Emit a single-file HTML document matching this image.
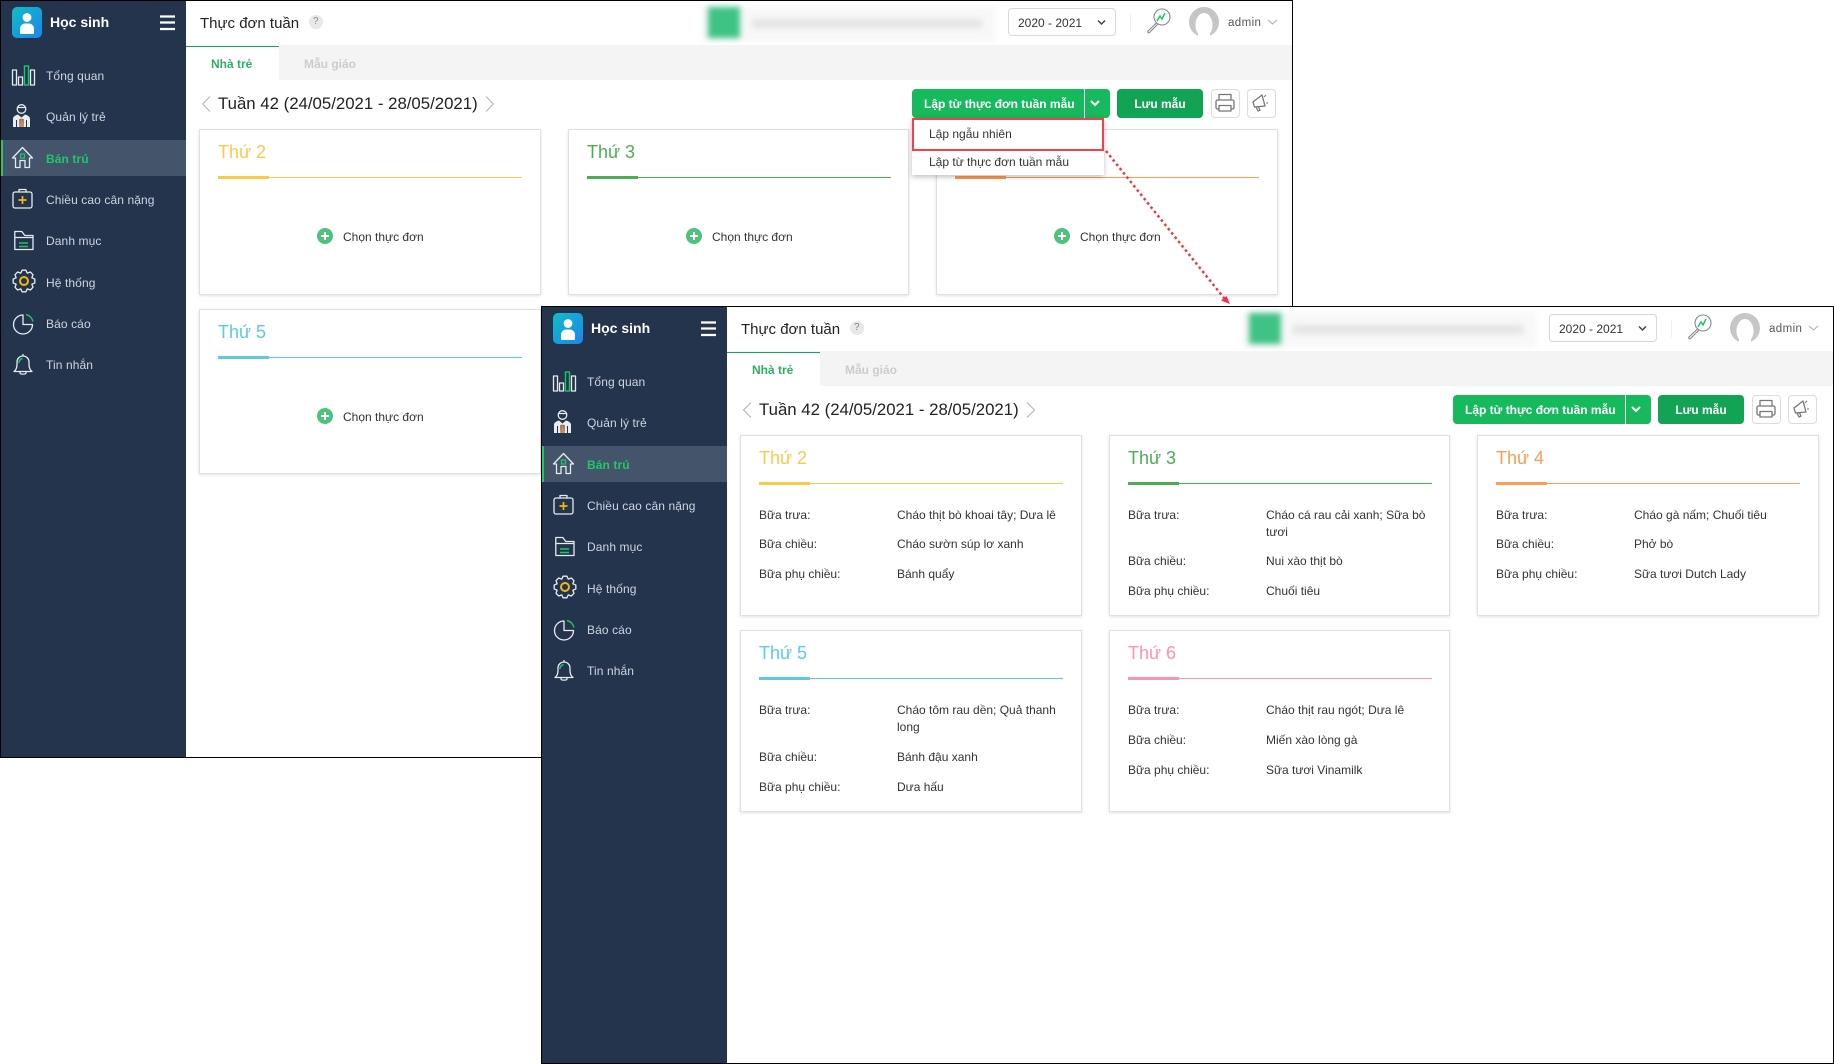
<!DOCTYPE html>
<html lang="vi"><head><meta charset="utf-8"><title>Thực đơn tuần</title>
<style>
html,body{margin:0;padding:0;background:#fff}
body{position:relative;width:1834px;height:1064px;overflow:hidden;font-family:"Liberation Sans","DejaVu Sans",sans-serif;color:#333}
.win{position:absolute;width:1293px;height:758px;background:#fff;overflow:hidden}
.bd{position:absolute;inset:0;border:1px solid #000;box-sizing:border-box;pointer-events:none;z-index:9}
.side{position:absolute;left:1px;top:0;width:185px;height:758px;background:#25344d}
.act{position:absolute;left:1px;top:140px;width:185px;height:36px;background:#44546a;border-left:2px solid #1fc867;box-sizing:border-box}
.tabs{position:absolute;left:186px;top:46px;right:0;height:34px;background:#f4f4f4}
.tab{position:absolute;left:186px;top:46px;width:93px;height:34px;background:#fff;border-top:1px solid #16a35a;box-sizing:border-box}
.t{position:absolute;white-space:nowrap;line-height:20px;height:20px;z-index:3}
.m{left:46px;font-size:12px;color:#ccd6e0;letter-spacing:.1px}
.ov{position:absolute;left:0;top:0;width:1293px;height:758px;pointer-events:none;z-index:2}
.card{position:absolute;width:342px;background:#fff;border:1px solid #e0e0e0;box-sizing:border-box;box-shadow:0 1px 3px rgba(0,0,0,.12)}
.card .h{position:absolute;left:18px;top:11px;font-size:18px;line-height:22px;white-space:nowrap}
.card .l{position:absolute;left:18px;top:47px;width:304px;height:1px}
.card .k{position:absolute;left:18px;top:46px;width:51px;height:3px}
.card .a,.card .b{position:absolute;white-space:nowrap;font-size:12px;line-height:17px;color:#333}
.card .a{left:18px}.card .b{left:156px}
.add{position:absolute;left:117px;top:98px;width:16px;height:16px;border-radius:50%;background:#4cc27d}
.add:before,.add:after{content:"";position:absolute;background:#fff}
.add:before{left:4px;top:7px;width:8px;height:2px}
.add:after{left:7px;top:4px;width:2px;height:8px}
.cho{position:absolute;left:143px;top:98px;font-size:12px;line-height:18px;white-space:nowrap;color:#333}
.y .h{color:#fdc94a}.y .l,.y .k{background:#fdc94a}
.g .h{color:#4cae52}.g .l,.g .k{background:#4cae52}
.o .h{color:#fd9c52}.o .l,.o .k{background:#fd9c52}
.c .h{color:#5ccae3}.c .l,.c .k{background:#5ccae3}
.p .h{color:#ff92ad}.p .l,.p .k{background:#ff92ad}
.btn{position:absolute;top:89px;height:29px;border-radius:4px;color:#fff;font-weight:bold;font-size:12px;line-height:31px;white-space:nowrap;box-sizing:border-box}
.ic{position:absolute;top:89px;width:29px;height:29px;border:1px solid #dcdcdc;border-radius:4px;box-sizing:border-box;background:#fff}
.sel{position:absolute;left:1008px;top:8px;width:108px;height:28px;border:1px solid #d8d8d8;border-radius:4px;box-sizing:border-box;background:#fff}
.blurbg{position:absolute;left:702px;top:6px;width:294px;height:36px;background:#f8f8f8;filter:blur(3px)}
.blurg{position:absolute;left:708px;top:7px;width:32px;height:31px;background:#3fc384;filter:blur(3px)}
.blurt{position:absolute;left:752px;top:19px;width:230px;height:9px;background:#e4e4e4;filter:blur(3px)}
.hsh{position:absolute;left:186px;top:45px;right:0;height:1px;background:#f5f5f5}
</style></head><body>

<svg width="0" height="0" style="position:absolute"><defs>
<linearGradient id="lg" x1="0" y1="0" x2="1" y2="1"><stop offset="0" stop-color="#11bcc6"/><stop offset="1" stop-color="#1b86ea"/></linearGradient>
<g id="chrome">
 <rect x="12" y="7" width="30" height="31" rx="5" fill="url(#lg)"/>
 <circle cx="27" cy="17.500" r="4.400" fill="#fff"/>
 <path d="M20 33v-4c0-3.500 2.500-5.500 5-5.500h4c2.500 0 5 2 5 5.500v4c0 .6-.5 1-1 1H21c-.5 0-1-.4-1-1z" fill="#fff"/>
 <path d="M160 16.500h15M160 22.500h15M160 29h15" stroke="#fff" stroke-width="2.300" fill="none"/>
 <path d="M13 127v-8c0-2.500 2-3.500 5-4.500l3.500 3 3.500-3c3 1 5 2 5 4.500v8h-3v-7h-1v7h-2.500v-8h-4v8H17v-7h-1v7z" fill="#e8edf2"/>
 <g fill="none" stroke="#e6ebf0" stroke-width="1.300" stroke-linejoin="round" stroke-linecap="round">
  <rect x="12.500" y="70" width="4" height="15"/><rect x="18.500" y="77" width="4" height="8"/><rect x="30.500" y="70" width="4" height="15"/>
  <circle cx="21.500" cy="109" r="4.300"/><path d="M17.500 107.500h8"/>
  <path d="M12.500 158L22.500 147.500 32.500 158 29.500 158V167.500H25V160.500H20V167.500H15.500V158Z"/>
  <rect x="13" y="192" width="19" height="16" rx="2"/><path d="M19 192v-2.500h7V192"/>
  <path d="M14.800 249.500V231.500h7l3 4H33V249.500ZM14.800 237.500H33"/>
  <path transform="translate(24 281)" d="M10.830-1.910L10.830 1.910 7.850 3.250 9.010 6.310 6.310 9.010 3.250 7.850 1.910 10.830-1.910 10.830-3.250 7.850-6.310 9.010-9.010 6.310-7.850 3.250-10.830 1.910-10.830-1.910-7.850-3.250-9.010-6.310-6.310-9.010-3.250-7.850-1.910-10.830 1.910-10.830 3.250-7.850 6.310-9.010 9.010-6.310 7.850-3.250Z"/>
  <path d="M23 315A9.500 9.500 0 1 0 32.500 324.500H23V315Z"/>
  <path d="M14 371.500c2.500-2 3-4 3-7V362a6 6 0 0 1 12 0v2.500c0 3 .5 5 3 7ZM23 356v-1.500M20 371.500v1.500c0 1.500 6 1.500 6 0v-1.500"/>
 </g>
 <rect x="24.500" y="66" width="4" height="19" fill="none" stroke="#1ec467" stroke-width="1.400"/>
 <path d="M20.500 118.500h2l.8 8.500h-3.600z" fill="#e6863a"/>
 <rect x="20.500" y="154" width="4" height="4" fill="none" stroke="#1ec467" stroke-width="1.300"/>
 <path d="M18.500 200h8M22.500 196v8" stroke="#f0b90b" stroke-width="1.700" fill="none"/>
 <path d="M19 243h9M19 246.500h9" stroke="#1ec467" stroke-width="1.500" fill="none"/>
 <circle cx="24" cy="281" r="4" fill="none" stroke="#f0b90b" stroke-width="2"/>
 <path d="M26 314.500A9.500 9.500 0 0 1 33 321.500" fill="none" stroke="#1ec467" stroke-width="1.500"/>
 <path d="M18.800 363c.3-2.500 1.600-4 3.800-4.500" fill="none" stroke="#1ec467" stroke-width="1.500"/>
 <circle cx="316" cy="22" r="7" fill="#e8e8e8"/>
 <path d="M210 96.500l-7.500 7.500 7.500 7.500" fill="none" stroke="#b0b0b0" stroke-width="1"/>
 <path d="M486 96.500l7.500 7.500-7.500 7.500" fill="none" stroke="#b0b0b0" stroke-width="1"/>
 <path d="M1098 20.500l3.500 3.500 3.500-3.500" fill="none" stroke="#444" stroke-width="1.500"/>
 <path d="M1130.500 14v17" stroke="#eee" fill="none"/>
 <g fill="none" stroke="#888" stroke-width="1.100">
  <circle cx="1162" cy="17" r="8"/><path d="M1156.500 23l-8.500 8c-1 1 .5 2.500 1.500 1.500l8.500-8.500"/>
 </g>
 <path d="M1157 21l3-5 2 3 3-6" fill="none" stroke="#1ec467" stroke-width="1.500"/>
 <circle cx="1204" cy="22" r="15" fill="#c6c6c6"/>
 <ellipse cx="1204" cy="25" rx="8.500" ry="12" fill="#fff"/><rect x="1198" y="31" width="12" height="7" fill="#fff"/><rect x="1186" y="37" width="36" height="3" fill="#fff"/>
 <path d="M1268 20l4.500 4 4.500-4" fill="none" stroke="#aaa" stroke-width="1"/>
 <path d="M1091 101l4 4 4-4" fill="none" stroke="#fff" stroke-width="2"/>
 <path d="M1084.500 89v29" stroke="#fff" fill="none"/>
 <g fill="none" stroke="#777" stroke-width="1.300" stroke-linejoin="round">
  <path d="M1219 100v-5.500h12v5.500M1218.500 109h-1c-.8 0-1.500-.7-1.500-1.500v-6c0-.8.7-1.500 1.500-1.500h15c.8 0 1.500.7 1.500 1.500v6c0 .8-.7 1.500-1.500 1.500h-1"/>
  <rect x="1219" y="105.500" width="12" height="5.500"/>
  <path d="M1253 102l9-7 3 11-10.500 1zM1256 107l2 4 2-.8-1.500-3.500"/>
 </g>
 <path d="M1264 97l2-2M1266 103h2" stroke="#777" fill="none"/>
</g>
</defs></svg>

<!-- WINDOW 1 -->
<div class="win" style="left:0;top:0;z-index:1">
 <div class="side"></div><div class="act"></div>
 <div class="hsh"></div><div class="tabs"></div><div class="tab"></div>
 <div class="blurbg"></div><div class="blurg"></div><div class="blurt"></div>
 <div class="sel"></div>
 <div class="t" style="left:50px;top:12px;font-size:14px;font-weight:bold;color:#fff">Học sinh</div>
 <div class="t m" style="top:66px">Tổng quan</div>
 <div class="t m" style="top:107px">Quản lý trẻ</div>
 <div class="t m" style="top:149px;color:#1fc867;font-weight:bold">Bán trú</div>
 <div class="t m" style="top:190px">Chiều cao cân nặng</div>
 <div class="t m" style="top:231px">Danh mục</div>
 <div class="t m" style="top:273px">Hệ thống</div>
 <div class="t m" style="top:314px">Báo cáo</div>
 <div class="t m" style="top:355px">Tin nhắn</div>
 <div class="t" style="left:200px;top:14px;font-size:15px;color:#222">Thực đơn tuần</div>
 <div class="t" style="left:313px;top:12px;font-size:10px;color:#888">?</div>
 <div class="t" style="left:211px;top:54px;font-size:12px;font-weight:bold;color:#2fae62">Nhà trẻ</div>
 <div class="t" style="left:304px;top:54px;font-size:12px;font-weight:bold;color:#ccc">Mẫu giáo</div>
 <div class="t" style="left:218px;top:94px;font-size:16.800px;color:#222">Tuần 42 (24/05/2021 - 28/05/2021)</div>
 <div class="t" style="left:1018px;top:13px;font-size:12px;color:#333">2020 - 2021</div>
 <div class="t" style="left:1228px;top:13px;font-size:11.500px;color:#555;letter-spacing:.4px">admin</div>
 <div class="btn" style="left:912px;width:198px;background:#16b95b;padding-left:12px">Lập từ thực đơn tuần mẫu</div>
 <div class="btn" style="left:1117px;width:86px;background:#12a354;text-align:center">Lưu mẫu</div>
 <div class="ic" style="left:1211px"></div><div class="ic" style="left:1247px"></div>

 <div class="card y" style="left:199px;top:129px;height:166px"><div class="h">Thứ 2</div><div class="l"></div><div class="k"></div><div class="add"></div><div class="cho">Chọn thực đơn</div></div>
 <div class="card g" style="left:568px;top:129px;height:166px;width:341px"><div class="h">Thứ 3</div><div class="l"></div><div class="k"></div><div class="add"></div><div class="cho">Chọn thực đơn</div></div>
 <div class="card o" style="left:936px;top:129px;height:166px"><div class="h">Thứ 4</div><div class="l"></div><div class="k"></div><div class="add"></div><div class="cho">Chọn thực đơn</div></div>
 <div class="card c" style="left:199px;top:309px;height:165px"><div class="h">Thứ 5</div><div class="l"></div><div class="k"></div><div class="add"></div><div class="cho">Chọn thực đơn</div></div>

 <div style="position:absolute;left:912px;top:118px;width:192px;height:57px;background:#fff;box-shadow:0 2px 5px rgba(0,0,0,.25);z-index:3">
  <div class="t" style="left:17px;top:6px;font-size:12px;color:#333">Lập ngẫu nhiên</div>
  <div class="t" style="left:17px;top:34px;font-size:12px;color:#333">Lập từ thực đơn tuần mẫu</div>
  <div style="position:absolute;left:0;top:0;width:192px;height:33px;border:2px solid #f44048;box-sizing:border-box"></div>
 </div>
 <svg class="ov" viewBox="0 0 1293 758"><use href="#chrome"/></svg>
 <div class="bd"></div>
</div>

<!-- WINDOW 2 -->
<div class="win" style="left:541px;top:306px;z-index:2">
 <div class="side"></div><div class="act"></div>
 <div class="hsh"></div><div class="tabs"></div><div class="tab"></div>
 <div class="blurbg"></div><div class="blurg"></div><div class="blurt"></div>
 <div class="sel"></div>
 <div class="t" style="left:50px;top:12px;font-size:14px;font-weight:bold;color:#fff">Học sinh</div>
 <div class="t m" style="top:66px">Tổng quan</div>
 <div class="t m" style="top:107px">Quản lý trẻ</div>
 <div class="t m" style="top:149px;color:#1fc867;font-weight:bold">Bán trú</div>
 <div class="t m" style="top:190px">Chiều cao cân nặng</div>
 <div class="t m" style="top:231px">Danh mục</div>
 <div class="t m" style="top:273px">Hệ thống</div>
 <div class="t m" style="top:314px">Báo cáo</div>
 <div class="t m" style="top:355px">Tin nhắn</div>
 <div class="t" style="left:200px;top:14px;font-size:15px;color:#222">Thực đơn tuần</div>
 <div class="t" style="left:313px;top:12px;font-size:10px;color:#888">?</div>
 <div class="t" style="left:211px;top:54px;font-size:12px;font-weight:bold;color:#2fae62">Nhà trẻ</div>
 <div class="t" style="left:304px;top:54px;font-size:12px;font-weight:bold;color:#ccc">Mẫu giáo</div>
 <div class="t" style="left:218px;top:94px;font-size:16.800px;color:#222">Tuần 42 (24/05/2021 - 28/05/2021)</div>
 <div class="t" style="left:1018px;top:13px;font-size:12px;color:#333">2020 - 2021</div>
 <div class="t" style="left:1228px;top:13px;font-size:11.500px;color:#555;letter-spacing:.4px">admin</div>
 <div class="btn" style="left:912px;width:198px;background:#16b95b;padding-left:12px">Lập từ thực đơn tuần mẫu</div>
 <div class="btn" style="left:1117px;width:86px;background:#12a354;text-align:center">Lưu mẫu</div>
 <div class="ic" style="left:1211px"></div><div class="ic" style="left:1247px"></div>

 <div class="card y" style="left:199px;top:129px;height:181px"><div class="h">Thứ 2</div><div class="l"></div><div class="k"></div>
  <div class="a" style="top:71px">Bữa trưa:</div><div class="b" style="top:71px">Cháo thịt bò khoai tây; Dưa lê</div>
  <div class="a" style="top:100px">Bữa chiều:</div><div class="b" style="top:100px">Cháo sườn súp lơ xanh</div>
  <div class="a" style="top:130px">Bữa phụ chiều:</div><div class="b" style="top:130px">Bánh quẩy</div></div>
 <div class="card g" style="left:568px;top:129px;height:181px;width:341px"><div class="h">Thứ 3</div><div class="l"></div><div class="k"></div>
  <div class="a" style="top:71px">Bữa trưa:</div><div class="b" style="top:71px">Cháo cá rau cải xanh; Sữa bò</div><div class="b" style="top:88px">tươi</div>
  <div class="a" style="top:117px">Bữa chiều:</div><div class="b" style="top:117px">Nui xào thịt bò</div>
  <div class="a" style="top:147px">Bữa phụ chiều:</div><div class="b" style="top:147px">Chuối tiêu</div></div>
 <div class="card o" style="left:936px;top:129px;height:181px"><div class="h">Thứ 4</div><div class="l"></div><div class="k"></div>
  <div class="a" style="top:71px">Bữa trưa:</div><div class="b" style="top:71px">Cháo gà nấm; Chuối tiêu</div>
  <div class="a" style="top:100px">Bữa chiều:</div><div class="b" style="top:100px">Phở bò</div>
  <div class="a" style="top:130px">Bữa phụ chiều:</div><div class="b" style="top:130px">Sữa tươi Dutch Lady</div></div>
 <div class="card c" style="left:199px;top:324px;height:182px"><div class="h">Thứ 5</div><div class="l"></div><div class="k"></div>
  <div class="a" style="top:71px">Bữa trưa:</div><div class="b" style="top:71px">Cháo tôm rau dền; Quả thanh</div><div class="b" style="top:88px">long</div>
  <div class="a" style="top:118px">Bữa chiều:</div><div class="b" style="top:118px">Bánh đậu xanh</div>
  <div class="a" style="top:148px">Bữa phụ chiều:</div><div class="b" style="top:148px">Dưa hấu</div></div>
 <div class="card p" style="left:568px;top:324px;height:182px;width:341px"><div class="h">Thứ 6</div><div class="l"></div><div class="k"></div>
  <div class="a" style="top:71px">Bữa trưa:</div><div class="b" style="top:71px">Cháo thịt rau ngót; Dưa lê</div>
  <div class="a" style="top:101px">Bữa chiều:</div><div class="b" style="top:101px">Miến xào lòng gà</div>
  <div class="a" style="top:131px">Bữa phụ chiều:</div><div class="b" style="top:131px">Sữa tươi Vinamilk</div></div>
 <svg class="ov" viewBox="0 0 1293 758"><use href="#chrome"/></svg>
 <div class="bd"></div>
</div>

<!-- red dotted arrow -->
<svg style="position:absolute;left:0;top:0;z-index:5" width="1834" height="1064" viewBox="0 0 1834 1064">
 <path d="M1106 151L1224 298" fill="none" stroke="#f2323c" stroke-width="2.500" stroke-dasharray="2.500 3"/>
 <path d="M1230 304l-9-3.500 5.500-4.500z" fill="#f2323c"/>
</svg>
</body></html>
